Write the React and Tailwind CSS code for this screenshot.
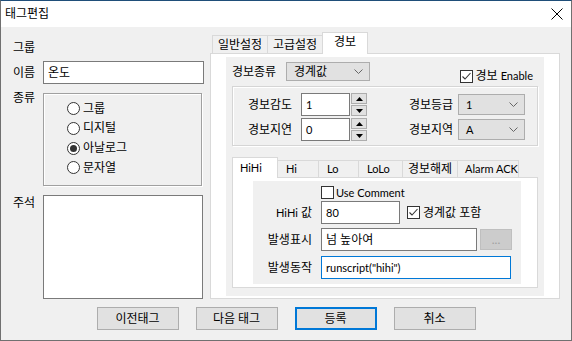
const font = "font-['Lato','Noto_Sans_CJK_KR',sans-serif]";

function L({ children }) {
  return <span className="text-[11px]">{children}</span>;
}

function Radio({ checked, label }) {
  return (
    <div className="flex h-[19.67px] items-center">
      <span className="flex h-[13px] w-[13px] items-center justify-center rounded-full border border-[#333] bg-white">
        {checked && <span className="h-[7px] w-[7px] rounded-full bg-[#333]" />}
      </span>
      <span className="ml-[3px]">{label}</span>
    </div>
  );
}

function Check({ checked }) {
  return (
    <span className="flex h-[13px] w-[13px] shrink-0 items-center justify-center border border-[#333] bg-white">
      {checked && (
        <svg width="11" height="11" viewBox="0 0 11 11">
          <path d="M1.5 5.5 L4 8 L9.5 2" stroke="#333" strokeWidth="1.1" fill="none" />
        </svg>
      )}
    </span>
  );
}

function Chevron() {
  return (
    <svg width="9" height="5" viewBox="0 0 9 5">
      <path d="M0.5 0.5 L4.5 4.5 L8.5 0.5" stroke="#666" strokeWidth="1" fill="none" />
    </svg>
  );
}

function Combo({ value, className }) {
  return (
    <div className={`flex items-center justify-between border border-[#adadad] bg-[#e1e1e1] pl-[7px] pr-[6px] ${className}`}>
      <span>{value}</span>
      <Chevron />
    </div>
  );
}

function SpinBtn({ up }) {
  return (
    <div className="flex h-[11px] w-[16px] items-center justify-center border border-[#adadad] bg-[#e1e1e1]">
      <svg width="7" height="4" viewBox="0 0 7 4">
        <path d={up ? 'M0 4 L3.5 0 L7 4 Z' : 'M0 0 L3.5 4 L7 0 Z'} fill="#000" />
      </svg>
    </div>
  );
}

function Spin({ value }) {
  return (
    <div className="flex items-center">
      <div className="flex h-[23px] w-[49px] items-center border border-[#7a7a7a] bg-white pl-[4px]"><L>{value}</L></div>
      <div className="ml-[1px] flex flex-col gap-[1px]">
        <SpinBtn up />
        <SpinBtn />
      </div>
    </div>
  );
}

function Field({ children, className }) {
  return <div className={`flex h-[23px] items-center whitespace-nowrap border bg-white pl-[4px] ${className}`}>{children}</div>;
}

const subTabs = [
  ['Hi', 'w-[42px] pl-[8px]'],
  ['Lo', 'w-[41px] pl-[8px]'],
  ['LoLo', 'w-[45px] pl-[8px]'],
  ['경보해제', 'w-[56px] pl-[5px]'],
  ['Alarm ACK', 'w-[62px] pl-[7px]'],
];

export default function App() {
  return (
    <div className={`${font} h-[341px] w-[572px] overflow-hidden border border-[#707070] border-t-[#1f4e79] bg-[#f0f0f0] text-[12px] leading-[14px] text-black`}>
      <div className="flex h-[26px] items-center justify-between bg-white pl-[4px] pr-[8px]">
        <span>태그편집</span>
        <svg width="12" height="12" viewBox="0 0 12 12">
          <path d="M0.5 0.5 L11.5 11.5 M11.5 0.5 L0.5 11.5" stroke="#000" strokeWidth="1" />
        </svg>
      </div>

      <div className="flex">
        <div className="w-[209px] pl-[12px] pt-[12px]">
          <div className="flex h-[18px] items-center">그룹</div>
          <div className="mt-[4px] flex items-center">
            <div className="w-[30px]">이름</div>
            <Field className="w-[161px] border-[#7a7a7a]">온도</Field>
          </div>
          <div className="mt-[9px] flex">
            <div className="-mt-[2px] w-[30px]">종류</div>
            <div className="h-[93px] w-[159px] border border-[#a0a0a0] pl-[23px] pt-[5px] shadow-[1px_1px_0_#fff,inset_1px_1px_0_#fff]">
              <Radio label="그룹" />
              <Radio label="디지털" />
              <Radio label="아날로그" checked />
              <Radio label="문자열" />
            </div>
          </div>
          <div className="mt-[9px] flex">
            <div className="mt-[1px] w-[30px]">주석</div>
            <div className="h-[104px] w-[160px] border border-[#7a7a7a] bg-white" />
          </div>
        </div>

        <div className="pt-[5px]">
          <div className="flex items-end pl-[2px]">
            <div className="flex h-[18px] w-[56px] items-center justify-center border-x border-t border-[#d9d9d9]">일반설정</div>
            <div className="-ml-px flex h-[18px] w-[56px] items-center justify-center border-x border-t border-[#d9d9d9]">고급설정</div>
            <div className="relative z-10 -mb-px -ml-px flex h-[22px] w-[46px] items-center justify-center border-x border-t border-[#d9d9d9] bg-white pb-[3px]">경보</div>
          </div>
          <div className="h-[246px] w-[350px] border border-[#d9d9d9] bg-white pl-[15px] pt-[3px]">
            <div className="h-[239px] w-[318px] bg-[#f0f0f0] pt-[5px]">
              <div className="flex h-[19px] items-start pl-[6px]">
                <span className="flex h-[19px] w-[54px] items-center">경보종류</span>
                <Combo value="경계값" className="h-[19px] w-[84px]" />
                <div className="ml-auto mr-[11px] mt-[7px] flex items-center">
                  <Check checked />
                  <span className="ml-[2px]">경보 <L>Enable</L></span>
                </div>
              </div>

              <div className="ml-[6px] mt-[5px] flex h-[60px] w-[306px] border border-[#d5d5d5] pl-[15px] pt-[6px] shadow-[1px_1px_0_#fff,inset_1px_1px_0_#fff]">
                <div className="flex flex-col gap-[2px]">
                  <div className="flex h-[23px] items-center">
                    <span className="w-[53px]">경보감도</span>
                    <Spin value="1" />
                  </div>
                  <div className="flex h-[23px] items-center">
                    <span className="w-[53px]">경보지연</span>
                    <Spin value="0" />
                  </div>
                </div>
                <div className="ml-[42px] flex flex-col gap-[2px]">
                  <div className="flex h-[23px] items-center">
                    <span className="w-[49px]">경보등급</span>
                    <Combo value={<L>1</L>} className="h-[21px] w-[67px]" />
                  </div>
                  <div className="flex h-[23px] items-center">
                    <span className="w-[49px]">경보지역</span>
                    <Combo value={<L>A</L>} className="h-[21px] w-[67px]" />
                  </div>
                </div>
              </div>

              <div className="ml-[6px] mt-[11px]">
                <div className="flex items-end">
                  <div className="relative z-10 -mb-px flex h-[21px] w-[46px] items-center border-x border-t border-[#d9d9d9] bg-white pb-[1px] pl-[7px]"><L>HiHi</L></div>
                  {subTabs.map(([t, w]) => (
                    <div key={t} className={`-ml-px flex h-[17px] items-center whitespace-nowrap border-x border-t border-[#d9d9d9] ${w}`}>
                      {/[a-zA-Z]/.test(t) ? <L>{t}</L> : t}
                    </div>
                  ))}
                </div>
                <div className="h-[111px] w-[306px] border border-[#d9d9d9] bg-white pl-[20px] pt-[3px]">
                  <div className="h-[103px] w-[268px] bg-[#f0f0f0] pt-[5px]">
                    <div className="flex h-[13px] items-center pl-[68px]">
                      <Check />
                      <span className="ml-[2px]"><L>Use Comment</L></span>
                    </div>
                    <div className="mt-[2px] flex h-[23px] items-center">
                      <span className="w-[68px] pr-[9px] text-right"><L>HiHi</L> 값</span>
                      <Field className="w-[79px] border-[#7a7a7a]"><L>80</L></Field>
                      <span className="ml-[7px]"><Check checked /></span>
                      <span className="ml-[3px]">경계값 포함</span>
                    </div>
                    <div className="mt-[4px] flex h-[23px] items-center">
                      <span className="w-[68px] pr-[9px] text-right">발생표시</span>
                      <Field className="w-[156px] border-[#7a7a7a]">넘 높아여</Field>
                      <div className="ml-[3px] flex h-[21px] w-[32px] items-center justify-center border border-[#bfbfbf] bg-[#cccccc] text-[#a0a0a0]">...</div>
                    </div>
                    <div className="mt-[5px] flex h-[23px] items-center">
                      <span className="w-[68px] pr-[9px] text-right">발생동작</span>
                      <Field className="w-[190px] border-[#0078d7]"><L>runscript("hihi")</L></Field>
                    </div>
                  </div>
                </div>
              </div>
            </div>
          </div>
        </div>
      </div>

      <div className="mt-[8px] flex justify-center gap-[17px]">
        <button className="flex h-[23px] w-[82px] items-center justify-center border border-[#adadad] bg-[#e1e1e1]">이전태그</button>
        <button className="flex h-[23px] w-[82px] items-center justify-center border border-[#adadad] bg-[#e1e1e1]">다음 태그</button>
        <button className="flex h-[23px] w-[82px] items-center justify-center border-2 border-[#0078d7] bg-[#e1e1e1]">등록</button>
        <button className="flex h-[23px] w-[82px] items-center justify-center border border-[#adadad] bg-[#e1e1e1]">취소</button>
      </div>
    </div>
  );
}
